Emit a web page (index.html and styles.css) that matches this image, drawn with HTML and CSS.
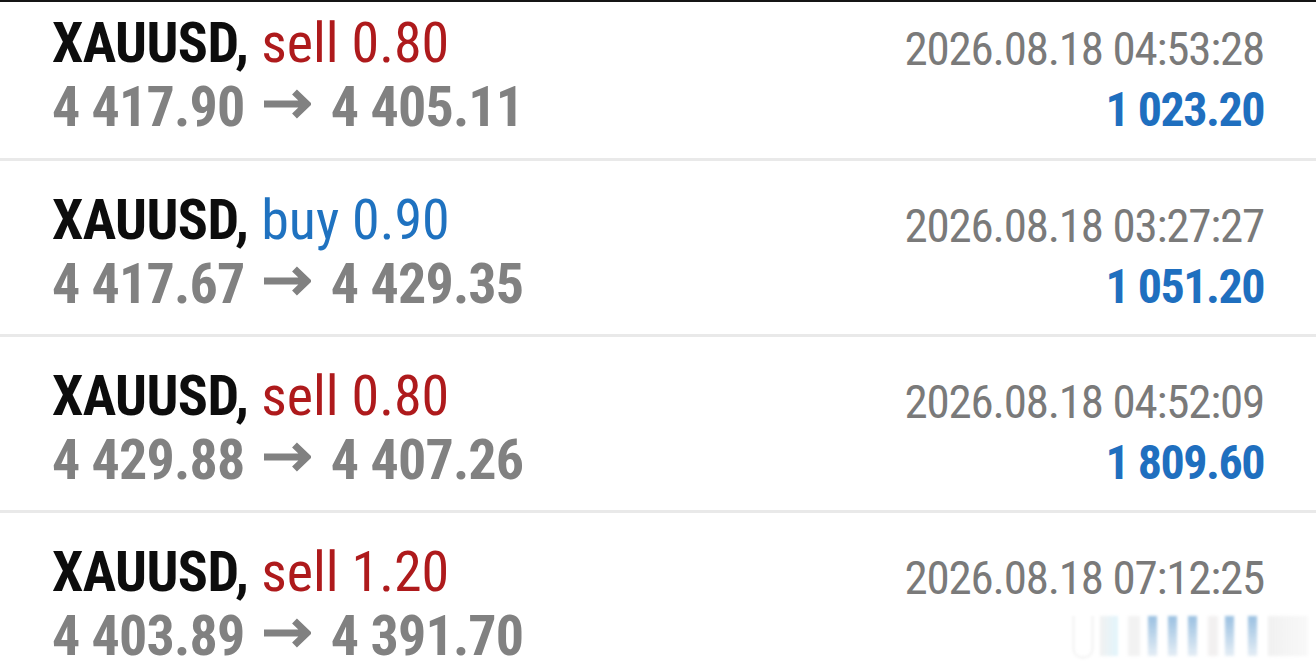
FILE: index.html
```html
<!DOCTYPE html>
<html>
<head>
<meta charset="utf-8">
<link rel="stylesheet" href="styles.css">
</head>
<body>
<div class="list">
  <div class="row first">
    <div class="cell title"><span class="sym">XAUUSD,</span> <span class="sell">sell 0.80</span></div>
    <div class="cell time">2026.08.18 04:53:28</div>
    <div class="cell price">4 417.90 <svg class="arrow" viewBox="0 0 48 32"><path d="M1 16H43M31.5 4L44 16L31.5 28"/></svg> 4 405.11</div>
    <div class="cell profit">1 023.20</div>
  </div>
  <div class="row">
    <div class="cell title"><span class="sym">XAUUSD,</span> <span class="buy">buy 0.90</span></div>
    <div class="cell time">2026.08.18 03:27:27</div>
    <div class="cell price">4 417.67 <svg class="arrow" viewBox="0 0 48 32"><path d="M1 16H43M31.5 4L44 16L31.5 28"/></svg> 4 429.35</div>
    <div class="cell profit">1 051.20</div>
  </div>
  <div class="row">
    <div class="cell title"><span class="sym">XAUUSD,</span> <span class="sell">sell 0.80</span></div>
    <div class="cell time">2026.08.18 04:52:09</div>
    <div class="cell price">4 429.88 <svg class="arrow" viewBox="0 0 48 32"><path d="M1 16H43M31.5 4L44 16L31.5 28"/></svg> 4 407.26</div>
    <div class="cell profit">1 809.60</div>
  </div>
  <div class="row">
    <div class="cell title"><span class="sym">XAUUSD,</span> <span class="sell">sell 1.20</span></div>
    <div class="cell time">2026.08.18 07:12:25</div>
    <div class="cell price">4 403.89 <svg class="arrow" viewBox="0 0 48 32"><path d="M1 16H43M31.5 4L44 16L31.5 28"/></svg> 4 391.70</div>
    <div class="cell profit"></div>
  </div>
</div>
<div class="watermark">
  <span class="wm cup"></span>
  <span class="wm g1"></span>
  <span class="wm g2"></span>
  <span class="wm b b1"></span>
  <span class="wm b b2"></span>
  <span class="wm b b3"></span>
  <span class="wm g3"></span>
  <span class="wm b b4"></span>
  <span class="wm b b5"></span>
  <span class="wm g4"></span>
</div>
</body>
</html>
```
FILE: styles.css
```css
html, body {
  margin: 0;
  padding: 0;
  background: #fff;
}
body {
  width: 1316px;
  height: 670px;
  overflow: hidden;
  position: relative;
  border-top: 2px solid #151515;
  box-sizing: border-box;
  font-family: "Roboto Condensed", "Roboto", sans-serif;
  font-stretch: 75%;
}
.list {
  display: flex;
  flex-direction: column;
}
.row {
  display: grid;
  grid-template-columns: 1fr auto;
  grid-auto-rows: 64px;
  align-content: start;
  align-items: baseline;
  padding: 27px 52px 0 52px;
  height: 176px;
  box-sizing: border-box;
  border-bottom: 3px solid #e9e9e9;
}
.row.first {
  padding-top: 9px;
  height: 159px;
}
.cell {
  white-space: nowrap;
  line-height: 64px;
}
.title, .price {
  font-size: 56px;
  font-weight: 700;
}
.sym { color: #0d0d0d; letter-spacing: -0.6px; }
.sell { color: #ae1a1c; font-weight: 400; }
.buy { color: #1f72c0; font-weight: 400; }
.price { color: #818181; letter-spacing: -0.8px; }
.arrow {
  width: 48px;
  height: 32px;
  margin: 0 8px 0 6px;
  vertical-align: 6px;
}
.arrow path {
  fill: none;
  stroke: #818181;
  stroke-width: 7;
  stroke-linejoin: miter;
}
.time {
  align-self: start;
  padding-top: 6px;
  font-size: 47px;
  letter-spacing: -1.2px;
  color: #7a7a7a;
  text-align: right;
}
.profit {
  font-size: 48px;
  font-weight: 700;
  letter-spacing: -1.5px;
  color: #1f6fbf;
  text-align: right;
}
.watermark {
  position: absolute;
  left: 1073px;
  top: 614px;
  display: flex;
  align-items: flex-start;
  filter: blur(1.5px);
}
.wm {
  height: 40px;
  flex: none;
}
.cup {
  width: 20px;
  height: 42px;
  border-radius: 0 0 9px 9px;
  border: 1px solid #e4e4e4;
  border-top: none;
  box-sizing: border-box;
}
.g1 { width: 18px; margin-left: 7px; background: linear-gradient(90deg, rgba(200,200,200,0.25), rgba(170,225,245,0.35)); }
.g2 { width: 12px; margin-left: 10px; background: rgba(190,190,190,0.2); }
.g3 { width: 10px; margin-left: 11px; background: rgba(190,180,180,0.2); }
.g4 { width: 40px; margin-left: 11px; background: linear-gradient(90deg, rgba(190,190,190,0.22), rgba(200,200,200,0.12)); }
.b {
  width: 9px;
  background: linear-gradient(rgba(70,140,200,0.55), rgba(150,185,215,0.25));
}
.b1 { margin-left: 8px; }
.b2 { margin-left: 11px; }
.b3 { margin-left: 11px; }
.b4 { margin-left: 7px; }
.b5 { margin-left: 14px; }
```
